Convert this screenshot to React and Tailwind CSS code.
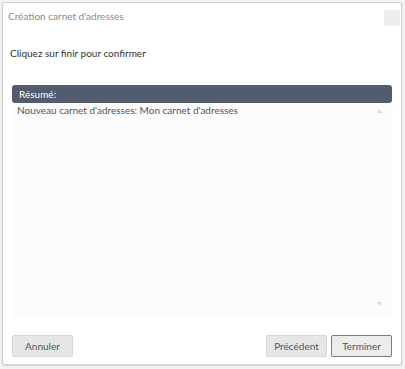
export default function App() {
  return (
    <div className="h-[369px] w-[405px] bg-[#f3f3f3] p-[2px] pb-[4px] pr-[3px] font-['Lato',sans-serif]">
      <div className="flex h-full flex-col rounded-[2px] border border-[#cfcfcf] bg-white shadow-[0_1px_2px_rgba(0,0,0,0.12)]">
        <div className="flex h-[24px] items-center justify-between pl-[5px] pr-[1px] pt-[5px]">
          <span className="-mt-[3px] text-[10px] text-[#8a8a8a]">Création carnet d'adresses</span>
          <button type="button" className="h-[16px] w-[16px] bg-[#ececec]" />
        </div>
        <div className="mt-[19px] pl-[7px] text-[10px] text-[#333]">Cliquez sur finir pour confirmer</div>
        <div className="mx-[9px] mt-[24px] flex flex-1 flex-col">
          <div className="flex h-[18px] items-center rounded-[3px] bg-[#535b6e] pl-[7px] text-[10px] text-white">
            Résumé:
          </div>
          <div className="relative flex-1 bg-[#fcfcfd]">
            <div className="pl-[5px] text-[10px] text-[#555]">
              Nouveau carnet d'adresses: Mon carnet d'adresses
            </div>
            <span className="absolute right-[9px] top-[4px] text-[7px] leading-none text-[#d4d4d4]">▲</span>
            <span className="absolute bottom-[10px] right-[9px] text-[7px] leading-none text-[#d4d4d4]">▼</span>
          </div>
        </div>
        <div className="flex items-center justify-between px-[9px] pb-[7px] pt-[18px]">
          <button type="button" className="h-[22px] w-[61px] rounded-[2px] border border-[#d6d6d6] bg-[#e6e6e6] text-[10px] text-[#555]">
            Annuler
          </button>
          <div className="flex gap-[4px]">
            <button type="button" className="h-[22px] w-[61px] rounded-[2px] border border-[#d6d6d6] bg-[#e6e6e6] text-[10px] text-[#555]">
              Précédent
            </button>
            <button type="button" className="h-[22px] w-[61px] rounded-[2px] border border-[#7a7a7a] bg-[#ececec] text-[10px] text-[#555]">
              Terminer
            </button>
          </div>
        </div>
      </div>
    </div>
  );
}
